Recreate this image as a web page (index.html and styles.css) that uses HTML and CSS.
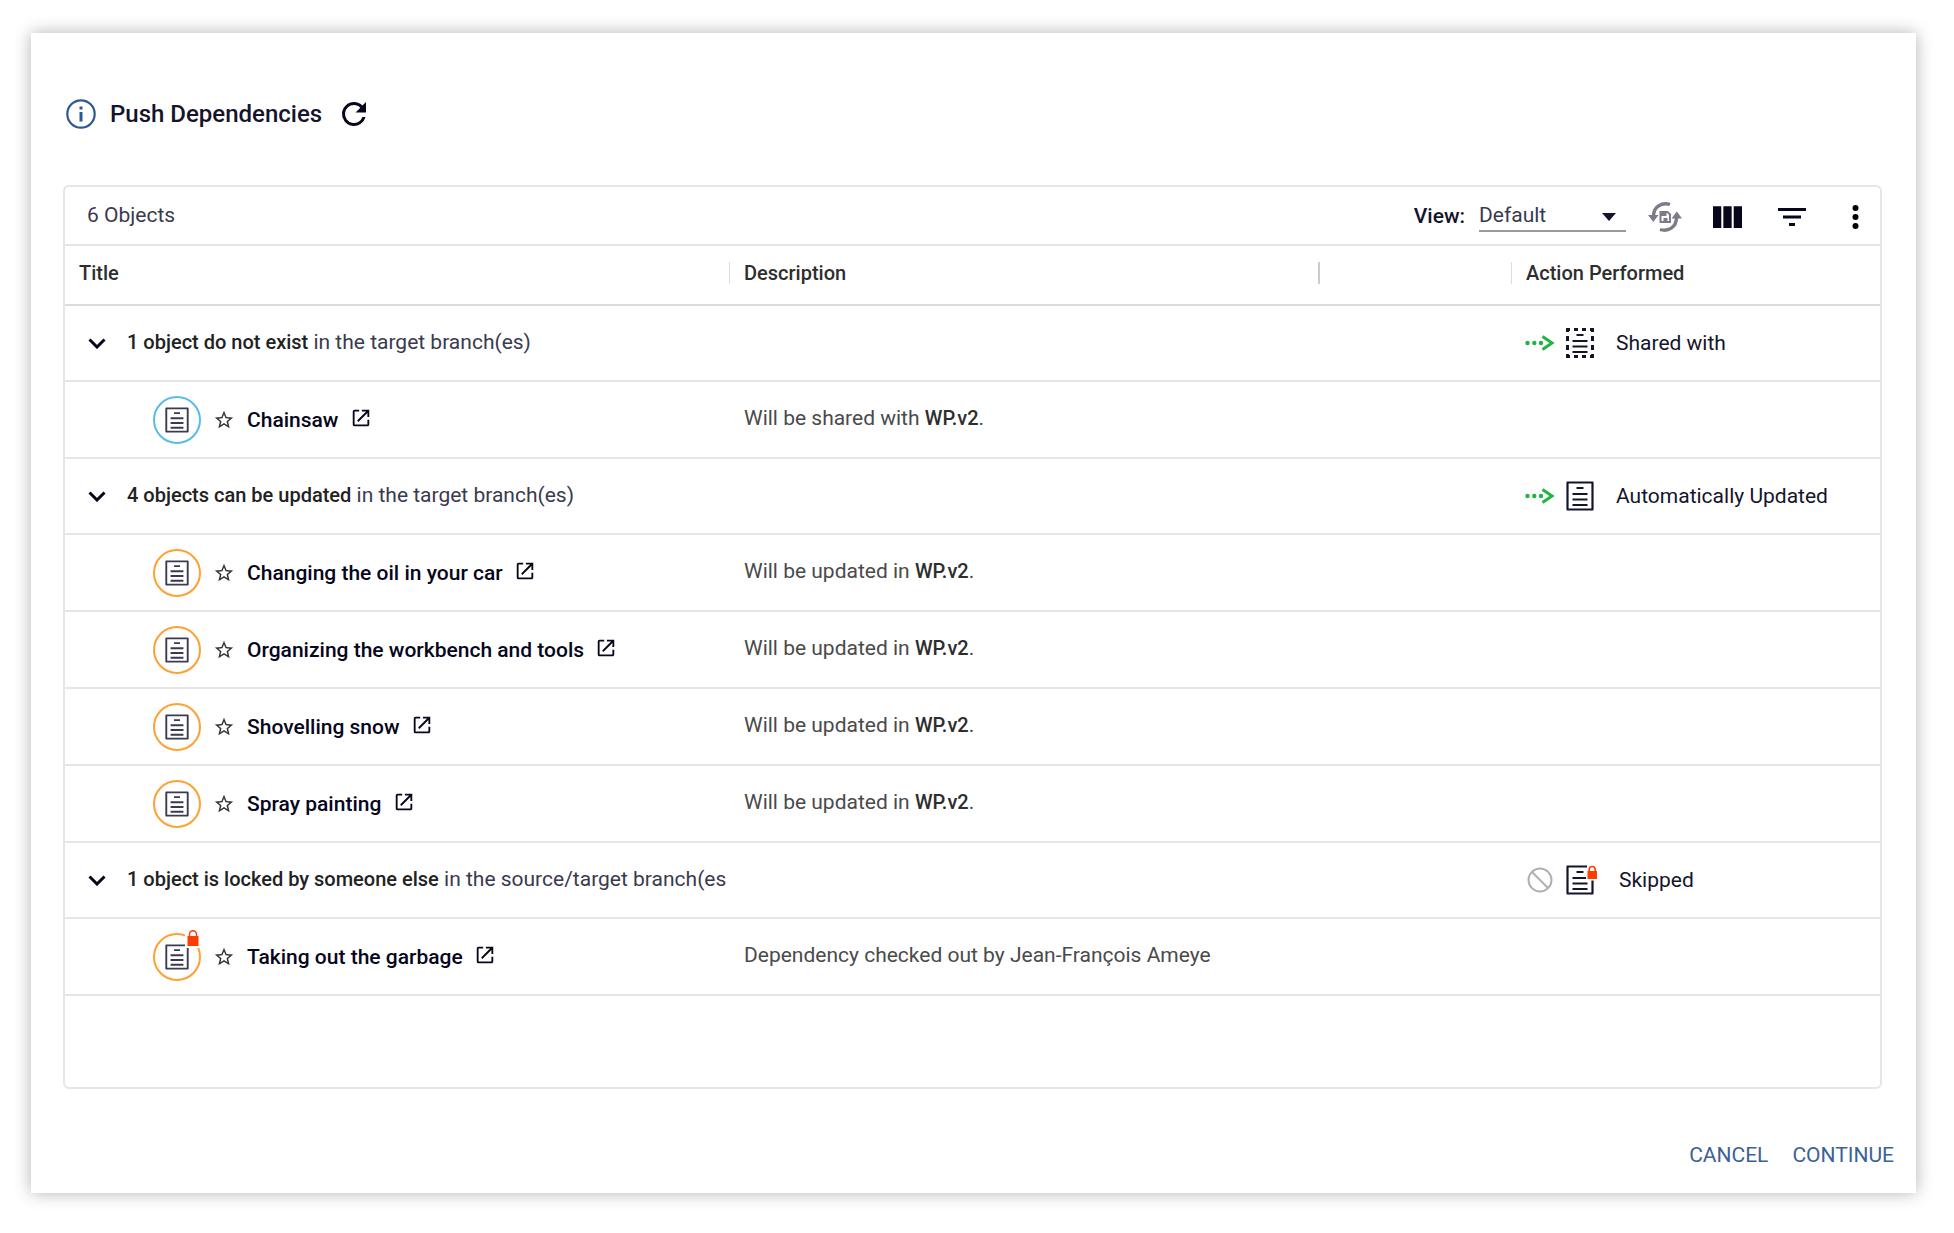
FILE: index.html
```html
<!DOCTYPE html>
<html lang="en">
<head>
  <meta charset="utf-8">
  <title>Push Dependencies</title>
  <link rel="stylesheet" href="styles.css">
</head>
<body>
  <!-- Shared icons -->
  <svg class="icon-defs" aria-hidden="true">
    <symbol id="icon-doc" viewBox="0 0 28 30">
      <path d="M1.5 1.5h25v27h-25z" fill="none" stroke="currentColor" stroke-width="2.2" stroke-linejoin="round"/>
      <path d="M10.5 7h7M6.5 13h15M6.5 18.5h15M6.5 24h15" fill="none" stroke="currentColor" stroke-width="2.2"/>
    </symbol>
    <symbol id="icon-doc-dashed" viewBox="0 0 28 30">
      <path d="M0 0h4v3h-1v1h-3zM8 0h4v3h-4zM16 0h4v3h-4zM24 0h4v4h-3v-1h-1zM0 8h3v5h-3zM25 8h3v5h-3zM0 17h3v5h-3zM25 17h3v5h-3zM0 26h3v1h1v3h-4zM8 27h4v3h-4zM16 27h4v3h-4zM25 26h3v4h-4v-3h1z" fill="currentColor"/>
      <path d="M10.5 7h7M6.5 13h15M6.5 18.5h15M6.5 24h15" fill="none" stroke="currentColor" stroke-width="2.2"/>
    </symbol>
    <symbol id="icon-doc-locked" viewBox="0 0 32 30">
      <path d="M21 1.5h-19.5v27h25v-13" fill="none" stroke="currentColor" stroke-width="2.2" stroke-linejoin="round"/>
      <path d="M10.5 7h7M6.5 13h13.5M6.5 18.5h15M6.5 24h15" fill="none" stroke="currentColor" stroke-width="2.2"/>
      <path d="M23.2 7V4.5a3 3 0 0 1 6 0V7" fill="none" stroke="#ff3d00" stroke-width="1.6"/>
      <path d="M21.5 6h9.5v8h-9.5z" fill="#ff3d00"/>
    </symbol>
    <symbol id="icon-lock" viewBox="0 0 12 16">
      <path d="M2.5 7V4.2a3.5 3.5 0 0 1 7 0V7" fill="none" stroke="currentColor" stroke-width="1.5"/>
      <path d="M.5 6h11v10h-11z" fill="currentColor"/>
    </symbol>
    <symbol id="icon-chevron" viewBox="0 0 18 11">
      <path d="M1.5 1.5L9 9l7.5-7.5" fill="none" stroke="currentColor" stroke-width="3"/>
    </symbol>
    <symbol id="icon-star" viewBox="0 0 24 24">
      <path d="M22 9.24l-7.19-.62L12 2 9.19 8.63 2 9.24l5.46 4.73L5.82 21 12 17.27 18.18 21l-1.63-7.03L22 9.24zM12 15.4l-3.76 2.27 1-4.28-3.32-2.88 4.38-.38L12 6.1l1.71 4.04 4.38.38-3.32 2.88 1 4.28L12 15.4z" fill="currentColor"/>
    </symbol>
    <symbol id="icon-open" viewBox="0 0 24 24">
      <path d="M19 19H5V5h5V3H5a2 2 0 0 0-2 2v14a2 2 0 0 0 2 2h14c1.1 0 2-.9 2-2v-5h-2v5zM13 3v2h4.59l-9.83 9.83 1.41 1.41L19 6.41V11h2V3h-8z" fill="currentColor"/>
    </symbol>
    <symbol id="icon-arrow" viewBox="0 0 30 16">
      <circle cx="2.5" cy="8" r="2.2"/><circle cx="9.3" cy="8" r="2.2"/><circle cx="16" cy="8" r="2.2"/>
      <path d="M17.5 1.5L27 8l-9.5 6.5" fill="none" stroke="currentColor" stroke-width="3"/>
    </symbol>
  </svg>

  <main class="dialog">
    <header class="dialog-header">
      <svg class="info-icon" viewBox="0 0 30 30">
        <circle cx="15" cy="15" r="13.7" fill="none" stroke="currentColor" stroke-width="2.2"/>
        <path d="M13.5 7.5h3v3h-3zM13.5 13h3v9.5h-3z" fill="currentColor"/>
      </svg>
      <h1>Push Dependencies</h1>
      <button class="icon-button refresh" aria-label="Refresh">
        <svg viewBox="0 0 24 24"><path d="M17.65 6.35A7.96 7.96 0 0 0 12 4a8 8 0 1 0 7.73 10h-2.08A6 6 0 1 1 12 6c1.66 0 3.14.69 4.22 1.78L13 11h7V4l-2.35 2.35z" fill="currentColor"/></svg>
      </button>
    </header>

    <section class="grid">
      <div class="toolbar">
        <span class="count">6 Objects</span>
        <label class="view-label" for="view">View:</label>
        <div class="select-wrapper">
          <select id="view">
            <option>Default</option>
          </select>
          <svg class="select-arrow" viewBox="0 0 14 8"><path d="M0 0h14L7 8z" fill="currentColor"/></svg>
        </div>
        <div class="tools">
          <button class="icon-button save-view" aria-label="Save view" disabled>
            <svg viewBox="0 0 34 30">
              <path d="M22 2.5C14 0 5.5 4.5 5.5 14M12 27.5c8 2.5 16.5-2 16.5-12" fill="none" stroke="currentColor" stroke-width="3.4"/>
              <path d="M0 13h10.5L5.3 20zM23.5 16.5H34l-5.2-7z" fill="currentColor"/>
              <path d="M12.5 10h7l2.5 2.5v7.5h-9.5z" fill="none" stroke="currentColor" stroke-width="2"/>
              <path d="M13 10.5h5.5v3.5h-5.5zM15.5 16h4v3.5h-4z" fill="currentColor"/>
            </svg>
          </button>
          <button class="icon-button columns" aria-label="Columns">
            <svg viewBox="0 0 28 21"><path d="M0 0h8v21H0zM10 0h8v21h-8zM20 0h8v21h-8z" fill="currentColor"/></svg>
          </button>
          <button class="icon-button filter" aria-label="Filter">
            <svg viewBox="0 0 28 18"><path d="M0 0h28v3H0zM5 7.5h18v3H5zM11 15h6v3h-6z" fill="currentColor"/></svg>
          </button>
          <button class="icon-button more" aria-label="More">
            <svg viewBox="0 0 6 24"><circle cx="3" cy="3" r="3"/><circle cx="3" cy="12" r="3"/><circle cx="3" cy="21" r="3"/></svg>
          </button>
        </div>
      </div>

      <table>
        <colgroup>
          <col class="col-title">
          <col class="col-description">
          <col class="col-empty">
          <col class="col-action">
        </colgroup>
        <thead>
          <tr>
            <th><span>Title</span></th>
            <th><span>Description</span></th>
            <th class="strong-divider"><span></span></th>
            <th><span>Action Performed</span></th>
          </tr>
        </thead>
        <tbody>
          <tr class="group">
            <td>
              <div class="group-title">
                <button class="icon-button chevron" aria-label="Collapse"><svg><use href="#icon-chevron"/></svg></button>
                <span><b>1 object do not exist</b> in the target branch(es)</span>
              </div>
            </td>
            <td></td>
            <td></td>
            <td>
              <div class="action">
                <svg class="arrow"><use href="#icon-arrow"/></svg>
                <svg class="doc"><use href="#icon-doc-dashed"/></svg>
                <span>Shared with</span>
              </div>
            </td>
          </tr>
          <tr>
            <td>
              <div class="object">
                <span class="badge shared"><svg><use href="#icon-doc"/></svg></span>
                <button class="icon-button star" aria-label="Add to favorites"><svg><use href="#icon-star"/></svg></button>
                <a href="#">Chainsaw <svg class="open"><use href="#icon-open"/></svg></a>
              </div>
            </td>
            <td class="description">Will be shared with <b>WP.v2</b>.</td>
            <td></td>
            <td></td>
          </tr>
        </tbody>
        <tbody>
          <tr class="group">
            <td>
              <div class="group-title">
                <button class="icon-button chevron" aria-label="Collapse"><svg><use href="#icon-chevron"/></svg></button>
                <span><b>4 objects can be updated</b> in the target branch(es)</span>
              </div>
            </td>
            <td></td>
            <td></td>
            <td>
              <div class="action">
                <svg class="arrow"><use href="#icon-arrow"/></svg>
                <svg class="doc"><use href="#icon-doc"/></svg>
                <span>Automatically Updated</span>
              </div>
            </td>
          </tr>
          <tr>
            <td>
              <div class="object">
                <span class="badge"><svg><use href="#icon-doc"/></svg></span>
                <button class="icon-button star" aria-label="Add to favorites"><svg><use href="#icon-star"/></svg></button>
                <a href="#">Changing the oil in your car <svg class="open"><use href="#icon-open"/></svg></a>
              </div>
            </td>
            <td class="description">Will be updated in <b>WP.v2</b>.</td>
            <td></td>
            <td></td>
          </tr>
          <tr>
            <td>
              <div class="object">
                <span class="badge"><svg><use href="#icon-doc"/></svg></span>
                <button class="icon-button star" aria-label="Add to favorites"><svg><use href="#icon-star"/></svg></button>
                <a href="#">Organizing the workbench and tools <svg class="open"><use href="#icon-open"/></svg></a>
              </div>
            </td>
            <td class="description">Will be updated in <b>WP.v2</b>.</td>
            <td></td>
            <td></td>
          </tr>
          <tr>
            <td>
              <div class="object">
                <span class="badge"><svg><use href="#icon-doc"/></svg></span>
                <button class="icon-button star" aria-label="Add to favorites"><svg><use href="#icon-star"/></svg></button>
                <a href="#">Shovelling snow <svg class="open"><use href="#icon-open"/></svg></a>
              </div>
            </td>
            <td class="description">Will be updated in <b>WP.v2</b>.</td>
            <td></td>
            <td></td>
          </tr>
          <tr>
            <td>
              <div class="object">
                <span class="badge"><svg><use href="#icon-doc"/></svg></span>
                <button class="icon-button star" aria-label="Add to favorites"><svg><use href="#icon-star"/></svg></button>
                <a href="#">Spray painting <svg class="open"><use href="#icon-open"/></svg></a>
              </div>
            </td>
            <td class="description">Will be updated in <b>WP.v2</b>.</td>
            <td></td>
            <td></td>
          </tr>
        </tbody>
        <tbody>
          <tr class="group">
            <td>
              <div class="group-title">
                <button class="icon-button chevron" aria-label="Collapse"><svg><use href="#icon-chevron"/></svg></button>
                <span><b>1 object is locked by someone else</b> in the source/target branch(es</span>
              </div>
            </td>
            <td></td>
            <td></td>
            <td>
              <div class="action">
                <svg class="skip" viewBox="0 0 26 26"><path d="M5 5l16 16" stroke="currentColor" stroke-width="2"/><circle cx="13" cy="13" r="11.5" fill="none" stroke="currentColor" stroke-width="2"/></svg>
                <svg class="doc-locked"><use href="#icon-doc-locked"/></svg>
                <span>Skipped</span>
              </div>
            </td>
          </tr>
          <tr>
            <td>
              <div class="object">
                <span class="badge"><svg><use href="#icon-doc"/></svg><svg class="lock"><use href="#icon-lock"/></svg></span>
                <button class="icon-button star" aria-label="Add to favorites"><svg><use href="#icon-star"/></svg></button>
                <a href="#">Taking out the garbage <svg class="open"><use href="#icon-open"/></svg></a>
              </div>
            </td>
            <td class="description">Dependency checked out by Jean-François Ameye</td>
            <td></td>
            <td></td>
          </tr>
        </tbody>
      </table>
    </section>

    <footer class="dialog-footer">
      <button class="text-button">CANCEL</button>
      <button class="text-button">CONTINUE</button>
    </footer>
  </main>
</body>
</html>
```
FILE: styles.css
```css
body {
  font-family: Roboto, "Liberation Sans", sans-serif;
  font-size: 21px;
  line-height: 24px;
  color: #14142b;
  background-color: #fff;
  margin: 0;
  padding: 33px 38px 37px 31px;
}
b {
  font-size: 20px;
  font-weight: 500;
}
.icon-defs {
  display: none;
}
.icon-button {
  display: flex;
  align-items: center;
  justify-content: center;
  background: none;
  border: none;
  padding: 0;
  color: #06061c;
  cursor: pointer;
}

.dialog {
  background-color: #fff;
  box-shadow: 0 0 16px rgba(0, 0, 0, 0.3);
  padding: 62px 16px 20px 32px;
}
.dialog-header {
  display: flex;
  align-items: center;
  height: 38px;
  margin: 0 0 52px 3px;
}
.dialog-header h1 {
  font-size: 24px;
  line-height: 28px;
  font-weight: 500;
  margin: 0 14px;
}
.info-icon {
  width: 30px;
  height: 30px;
  color: #2a5a94;
}
.refresh svg {
  width: 36px;
  height: 36px;
}

.grid {
  border: 2px solid #e6e6e6;
  border-radius: 6px;
  margin-right: 18px;
  padding-bottom: 91px;
}
.toolbar {
  display: flex;
  align-items: center;
  height: 57px;
  padding: 0 21px 0 22px;
  border-bottom: 2px solid #e6e6e6;
}
.count {
  flex: 1;
  padding-bottom: 2px;
  color: #3a3a4e;
}
.view-label {
  font-weight: 500;
  margin-right: 14px;
}
.select-wrapper {
  display: flex;
  align-items: center;
  width: 147px;
  border-bottom: 2px solid #9a9a9a;
}
.select-wrapper select {
  appearance: none;
  flex: 1;
  border: none;
  background: none;
  padding: 0;
  height: 30px;
  font: inherit;
  color: #3a3a4e;
}
.select-arrow {
  width: 14px;
  height: 8px;
  margin-right: 10px;
  padding-top: 4px;
}
.tools {
  display: flex;
  align-items: center;
  margin-left: 22px;
  padding-top: 2px;
}
.save-view {
  color: #7b7b8a;
}
.save-view svg {
  width: 34px;
  height: 30px;
}
.columns {
  margin-left: 31px;
}
.columns svg {
  width: 29px;
  height: 22px;
}
.filter {
  margin-left: 36px;
}
.filter svg {
  width: 28px;
  height: 18px;
}
.more {
  margin-left: 46px;
}
.more svg {
  width: 7px;
  height: 24px;
}

table {
  width: 100%;
  table-layout: fixed;
  border-collapse: separate;
  border-spacing: 0;
}
.col-title {
  width: 664px;
}
.col-empty {
  width: 193px;
}
.col-action {
  width: 369px;
}
th {
  height: 54px;
  padding: 0 0 4px;
  border-bottom: 2px solid #dcdcdc;
  text-align: left;
  font-size: 20px;
  font-weight: 500;
  color: #2e2e2e;
}
th span {
  display: block;
  min-height: 22px;
  line-height: 22px;
  padding-left: 14px;
}
th + th span {
  border-left: 1px solid #dcdcdc;
}
th.strong-divider span {
  border-left: 2px solid #ccc;
}
td {
  height: 75px;
  padding: 0;
  border-bottom: 2px solid #e6e6e6;
  white-space: nowrap;
}
.group td {
  height: 74px;
}
.group-title {
  display: flex;
  align-items: center;
  padding-left: 23px;
  color: #3a3a4e;
}
.group-title span {
  padding-bottom: 2px;
}
.group-title b {
  color: #222;
}
.chevron {
  margin-right: 21px;
}
.chevron svg {
  width: 18px;
  height: 11px;
}
.object {
  display: flex;
  align-items: center;
  padding-left: 88px;
}
.object a {
  color: #06061c;
  font-weight: 500;
  text-decoration: none;
}
.badge {
  position: relative;
  display: flex;
  align-items: center;
  justify-content: center;
  width: 44px;
  height: 44px;
  border: 2px solid #ffa033;
  border-radius: 50%;
  color: #3a3a52;
}
.badge.shared {
  border-color: #56bdea;
}
.badge svg {
  width: 24px;
  height: 26px;
}
.badge .lock {
  position: absolute;
  top: -5px;
  right: 0;
  width: 12px;
  height: 16px;
  color: #ff3d00;
  background-color: #fff;
  box-shadow: 0 0 0 2px #fff;
}
.star {
  margin: 0 12px;
  color: #333;
}
.star svg {
  width: 22px;
  height: 22px;
}
.open {
  width: 22px;
  height: 22px;
  margin-left: 6px;
  vertical-align: -2px;
}
td.description {
  height: 71px;
  padding: 0 0 4px 15px;
  color: #4a4a4a;
}
.description b {
  color: #2e2e2e;
}
.action {
  display: flex;
  align-items: center;
  padding-left: 14px;
}
.arrow {
  width: 30px;
  height: 16px;
  margin-right: 11px;
  color: #1eb545;
  fill: #1eb545;
}
.doc {
  width: 28px;
  height: 30px;
  margin-right: 22px;
}
.skip {
  width: 26px;
  height: 26px;
  margin: 0 13px 0 2px;
  color: #b0b0b0;
}
.doc-locked {
  width: 32px;
  height: 30px;
  margin-right: 21px;
}

.dialog-footer {
  display: flex;
  justify-content: flex-end;
  margin-top: 48px;
}
.text-button {
  background: none;
  border: none;
  padding: 6px;
  margin-left: 12px;
  font: inherit;
  color: #3a6298;
  cursor: pointer;
}
```
